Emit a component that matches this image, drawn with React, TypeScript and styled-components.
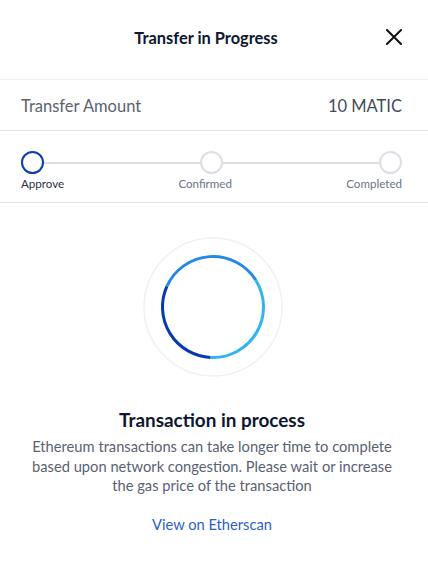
import React from 'react';
import styled, { createGlobalStyle } from 'styled-components';

const GlobalStyle = createGlobalStyle`
  html, body {
    margin: 0;
    padding: 0;
    background: #ffffff;
  }
  body {
    font-family: 'Lato', 'Open Sans', sans-serif;
    -webkit-font-smoothing: antialiased;
  }
`;

const Modal = styled.div`
  width: 428px;
  height: 567px;
  background: #fff;
  display: flex;
  flex-direction: column;
`;

const Header = styled.div`
  height: 80px;
  position: relative;
  display: flex;
  align-items: center;
  justify-content: center;
  padding-right: 16px;
  border-bottom: 1px solid #f0f1f4;
  box-sizing: border-box;
`;

const Title = styled.h1`
  margin: -4px 0 0;
  font-size: 16.4px;
  font-weight: 700;
  color: #0e1630;
`;

const CloseButton = styled.button`
  position: absolute;
  right: 24px;
  top: 27px;
  width: 20px;
  height: 20px;
  padding: 0;
  border: none;
  background: none;
  cursor: pointer;
  display: flex;
  align-items: center;
  justify-content: center;
`;

const AmountRow = styled.div`
  height: 51px;
  padding: 0 26px 0 21px;
  display: flex;
  align-items: center;
  justify-content: space-between;
  border-bottom: 1px solid #e4e6eb;
  box-sizing: border-box;
`;

const AmountText = styled.span<{ $strong?: boolean }>`
  font-size: 16.5px;
  color: ${p => (p.$strong ? '#444b5b' : '#5a6272')};
  margin-top: 1px;
`;

const Stepper = styled.div`
  height: 72px;
  padding: 20px 26px 0 21px;
  box-sizing: border-box;
  border-bottom: 1px solid #e4e6eb;
`;

const Track = styled.div`
  display: flex;
  align-items: center;
`;

const Dot = styled.div<{ $active?: boolean }>`
  width: 23px;
  height: 23px;
  box-sizing: border-box;
  border-radius: 50%;
  border: 2px solid ${p => (p.$active ? '#0a3cb8' : '#dcdfe6')};
  flex-shrink: 0;
`;

const Line = styled.div`
  flex: 1;
  height: 2px;
  background: #dcdfe6;
`;

const Labels = styled.div`
  display: flex;
  justify-content: space-between;
  margin-top: 3px;
`;

const StepLabel = styled.span<{ $active?: boolean }>`
  font-size: 11.6px;
  color: ${p => (p.$active ? '#2b3140' : '#6b7385')};
`;

const Body = styled.div`
  display: flex;
  flex-direction: column;
  align-items: center;
  padding: 34px 4px 0 0;
`;

const SpinnerWrap = styled.div`
  width: 140px;
  height: 140px;
  margin-left: 2px;
`;

const Heading = styled.h2`
  margin: 31px 0 0;
  font-size: 18.9px;
  font-weight: 700;
  color: #0e1630;
`;

const Description = styled.p`
  margin: 6px 0 0;
  width: 370px;
  text-align: center;
  font-size: 14.7px;
  line-height: 19.6px;
  color: #5a6272;
`;

const Link = styled.a`
  margin-top: 19px;
  font-size: 14.7px;
  color: #2a5fc7;
  text-decoration: none;
`;

const arc = (cx: number, cy: number, r: number, a0: number, a1: number) => {
  const rad = (a: number) => ((a - 90) * Math.PI) / 180;
  const x0 = cx + r * Math.cos(rad(a0));
  const y0 = cy + r * Math.sin(rad(a0));
  const x1 = cx + r * Math.cos(rad(a1));
  const y1 = cy + r * Math.sin(rad(a1));
  const large = a1 - a0 > 180 ? 1 : 0;
  return `M ${x0} ${y0} A ${r} ${r} 0 ${large} 1 ${x1} ${y1}`;
};

const Spinner = () => (
  <svg width="140" height="140" viewBox="0 0 140 140">
    <circle cx="70" cy="70" r="69" fill="none" stroke="#f0f1f4" strokeWidth="1.5" />
    <path d={arc(70, 70, 50.5, 294, 418)} fill="none" stroke="#2488ea" strokeWidth="3" />
    <path d={arc(70, 70, 50.5, 58, 183)} fill="none" stroke="#2fb5ef" strokeWidth="3" />
    <path d={arc(70, 70, 50.5, 183, 294)} fill="none" stroke="#0738b0" strokeWidth="3" />
  </svg>
);

const App: React.FC = () => (
  <>
    <GlobalStyle />
    <Modal>
      <Header>
        <Title>Transfer in Progress</Title>
        <CloseButton aria-label="Close">
          <svg width="16" height="16" viewBox="0 0 16 16">
            <path d="M1 1 L15 15 M15 1 L1 15" stroke="#111" strokeWidth="2" strokeLinecap="square" />
          </svg>
        </CloseButton>
      </Header>
      <AmountRow>
        <AmountText>Transfer Amount</AmountText>
        <AmountText $strong>10 MATIC</AmountText>
      </AmountRow>
      <Stepper>
        <Track>
          <Dot $active />
          <Line />
          <Dot />
          <Line />
          <Dot />
        </Track>
        <Labels>
          <StepLabel $active>Approve</StepLabel>
          <StepLabel>Confirmed</StepLabel>
          <StepLabel>Completed</StepLabel>
        </Labels>
      </Stepper>
      <Body>
        <SpinnerWrap>
          <Spinner />
        </SpinnerWrap>
        <Heading>Transaction in process</Heading>
        <Description>
          Ethereum transactions can take longer time to complete based upon network congestion. Please wait or increase the gas price of the transaction
        </Description>
        <Link href="#">View on Etherscan</Link>
      </Body>
    </Modal>
  </>
);

export default App;
